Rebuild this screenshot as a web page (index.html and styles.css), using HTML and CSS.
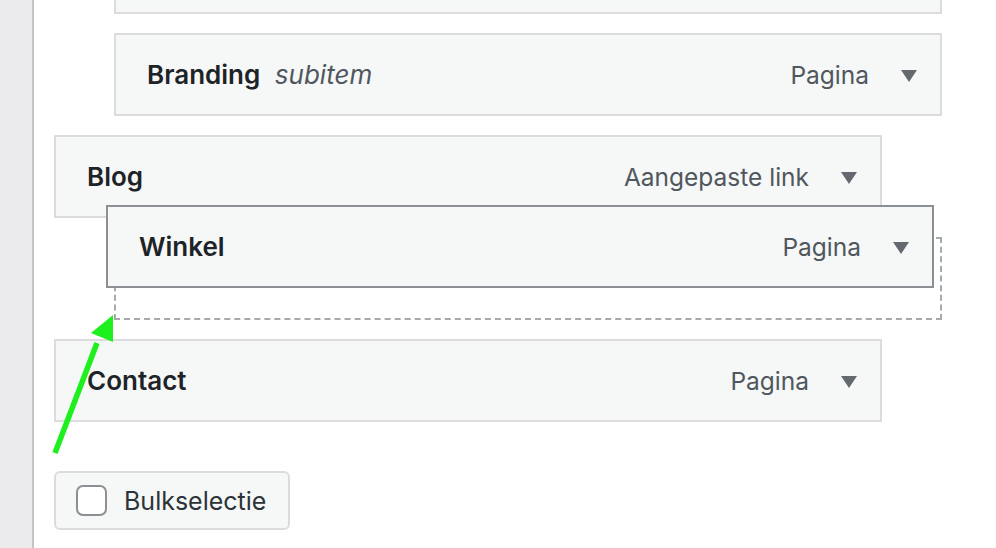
FILE: index.html
```html
<!DOCTYPE html>
<html lang="nl">
<head>
<meta charset="UTF-8" />
<meta name="viewport" content="width=device-width, initial-scale=1" />
<title>Menustructuur</title>
<link rel="stylesheet" href="styles.css">
</head>
<body>

<div class="sidebar"></div>

<div class="menu-area">
  <ul class="menu-list">
    <li class="menu-item depth-1 cut-off"></li>
    <li class="menu-item depth-1">
      <span class="item-title">Branding <em class="sub-label">subitem</em></span>
      <span class="item-controls"><span class="item-type">Pagina</span><span class="arrow"></span></span>
    </li>
    <li class="menu-item">
      <span class="item-title">Blog</span>
      <span class="item-controls"><span class="item-type">Aangepaste link</span><span class="arrow"></span></span>
    </li>
    <li class="placeholder depth-1"></li>
    <li class="menu-item">
      <span class="item-title">Contact</span>
      <span class="item-controls"><span class="item-type">Pagina</span><span class="arrow"></span></span>
    </li>
  </ul>

  <!-- item being dragged -->
  <div class="menu-item dragging">
    <span class="item-title">Winkel</span>
    <span class="item-controls"><span class="item-type">Pagina</span><span class="arrow"></span></span>
  </div>

  <label class="bulk-select">
    <span class="fake-checkbox"></span>
    Bulkselectie
  </label>

  <svg class="hint-arrow" width="80" height="150" viewBox="0 0 80 150" aria-hidden="true">
    <line x1="6" y1="138" x2="48" y2="28" stroke="#1ef01e" stroke-width="5.5" />
    <polygon points="64,0 42,18 64,27" fill="#1ef01e" />
  </svg>
</div>

</body>
</html>
```

FILE: styles.css
```css
html, body {
  height: 100%;
}
body {
  margin: 0;
  display: flex;
  background: #fff;
  font-family: Inter, "Noto Sans", sans-serif;
  overflow: hidden;
}
.sidebar {
  width: 32px;
  flex: none;
  background: #ebebed;
  border-right: 2px solid #c3c4c7;
}
.menu-area {
  position: relative;
  flex: 1;
  padding-left: 20px;
}
.menu-list {
  list-style: none;
  margin: 0;
  padding: 0;
}
.menu-item {
  box-sizing: border-box;
  width: 828px;
  height: 83px;
  margin-bottom: 19px;
  padding: 0 23px 0 31px;
  display: flex;
  align-items: center;
  justify-content: space-between;
  background: #f6f7f7;
  border: 2px solid #dcdcde;
}
.depth-1 {
  margin-left: 60px;
}
.cut-off {
  margin-top: -69px;
}
.item-title {
  font-size: 26px;
  font-weight: 600;
  color: #1d2327;
}
.sub-label {
  font-weight: 400;
  color: #50575e;
  margin-left: 8px;
}
.item-controls {
  display: flex;
  align-items: center;
  gap: 32px;
}
.item-type {
  font-size: 24.5px;
  color: #50575e;
}
.arrow {
  width: 0;
  height: 0;
  border-left: 8px solid transparent;
  border-right: 8px solid transparent;
  border-top: 12px solid #646970;
  margin-top: 2px;
}
.placeholder {
  box-sizing: border-box;
  width: 828px;
  height: 83px;
  margin-bottom: 19px;
  border: 2px dashed #a7aaad;
}
.dragging {
  position: absolute;
  left: 72px;
  top: 205px;
  width: 828px;
  border-color: #8c8f94;
  margin: 0;
}
.bulk-select {
  box-sizing: border-box;
  width: 236px;
  height: 59px;
  margin-top: 49px;
  padding: 0 20px;
  display: flex;
  align-items: center;
  gap: 17px;
  background: #f6f7f7;
  border: 2px solid #dcdcde;
  border-radius: 6px;
  font-size: 25px;
  color: #2c3338;
  cursor: pointer;
}
.fake-checkbox {
  box-sizing: border-box;
  width: 31px;
  height: 31px;
  background: #fff;
  border: 2px solid #8c8f94;
  border-radius: 7px;
}
.hint-arrow {
  position: absolute;
  left: 15px;
  top: 315px;
}
```
